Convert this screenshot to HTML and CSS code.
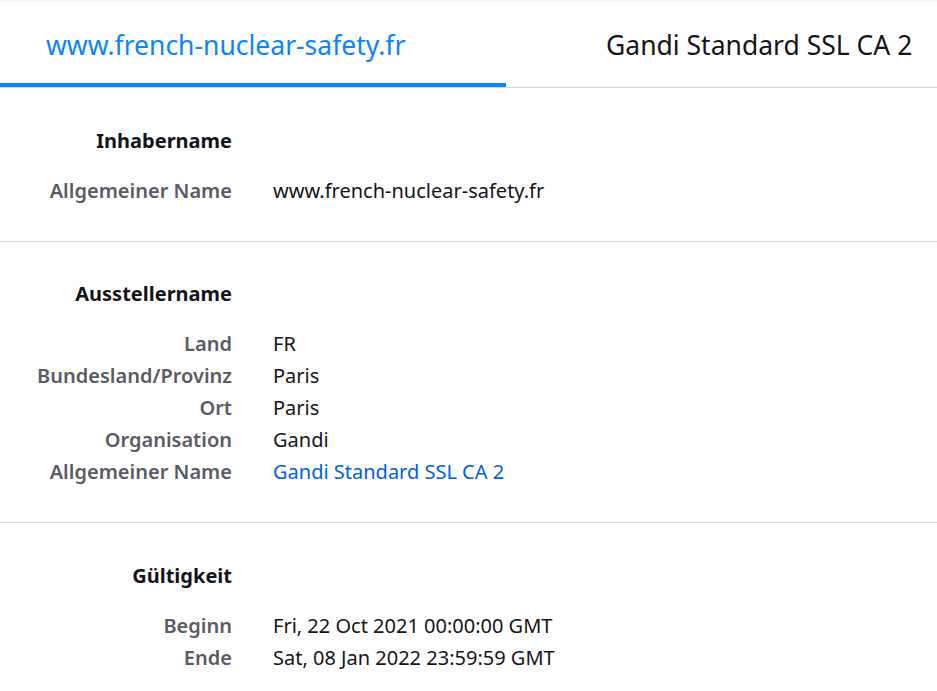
FILE: index.html
```html
<!DOCTYPE html>
<html lang="de">
<head>
<meta charset="utf-8">
<link rel="stylesheet" href="styles.css">
</head>
<body>
<div class="topstrip"></div>
<nav class="tabs">
  <div class="tab tab-first selected">www.french-nuclear-safety.fr</div>
  <div class="tab tab-second">Gandi Standard SSL CA 2</div>
</nav>
<main>
  <section class="info">
    <div class="heading">Inhabername</div>
    <div class="row"><span class="label">Allgemeiner Name</span><span class="value">www.french-nuclear-safety.fr</span></div>
  </section>
  <section class="info">
    <div class="heading">Ausstellername</div>
    <div class="row"><span class="label">Land</span><span class="value">FR</span></div>
    <div class="row"><span class="label">Bundesland/Provinz</span><span class="value">Paris</span></div>
    <div class="row"><span class="label">Ort</span><span class="value">Paris</span></div>
    <div class="row"><span class="label">Organisation</span><span class="value">Gandi</span></div>
    <div class="row"><span class="label">Allgemeiner Name</span><span class="value link">Gandi Standard SSL CA 2</span></div>
  </section>
  <section class="info">
    <div class="heading">Gültigkeit</div>
    <div class="row"><span class="label">Beginn</span><span class="value">Fri, 22 Oct 2021 00:00:00 GMT</span></div>
    <div class="row"><span class="label">Ende</span><span class="value">Sat, 08 Jan 2022 23:59:59 GMT</span></div>
  </section>
</main>
</body>
</html>
```
FILE: styles.css
```css
* { box-sizing: border-box; }
html, body {
  margin: 0;
  padding: 0;
  background: #ffffff;
  overflow: hidden;
}
body {
  font-family: "Noto Sans", sans-serif;
  color: #15141a;
  width: 937px;
  height: 691px;
}
.topstrip {
  height: 2px;
  background: #f5f5f6;
}
.tabs {
  display: flex;
  height: 86px;
  border-bottom: 1px solid #d7d7db;
  white-space: nowrap;
}
.tab {
  display: flex;
  align-items: center;
  font-size: 26.5px;
  color: #15141a;
  border-bottom: 4px solid transparent;
  padding-top: 4px;
}
.tab-first {
  width: 506px;
  padding-left: 46px;
}
.tab-second {
  flex: 1;
  padding-left: 100px;
}
.tab.selected {
  color: #0a84ff;
  border-bottom-color: #0a84ff;
}
.info {
  padding: 36px 0 34px;
  border-bottom: 1px solid #d7d7db;
}
.info:first-child,
.info:last-child {
  padding-top: 37px;
}
.heading {
  width: 232px;
  text-align: right;
  font-size: 20px;
  font-weight: 700;
  line-height: 32px;
  margin-bottom: 18px;
}
.row {
  display: grid;
  grid-template-columns: 232px 1fr;
  column-gap: 41px;
  font-size: 20px;
  line-height: 32px;
}
.label {
  text-align: right;
  font-weight: 600;
  color: #5b5b66;
}
.value {
  color: #15141a;
}
.value.link {
  color: #0060df;
}
```
